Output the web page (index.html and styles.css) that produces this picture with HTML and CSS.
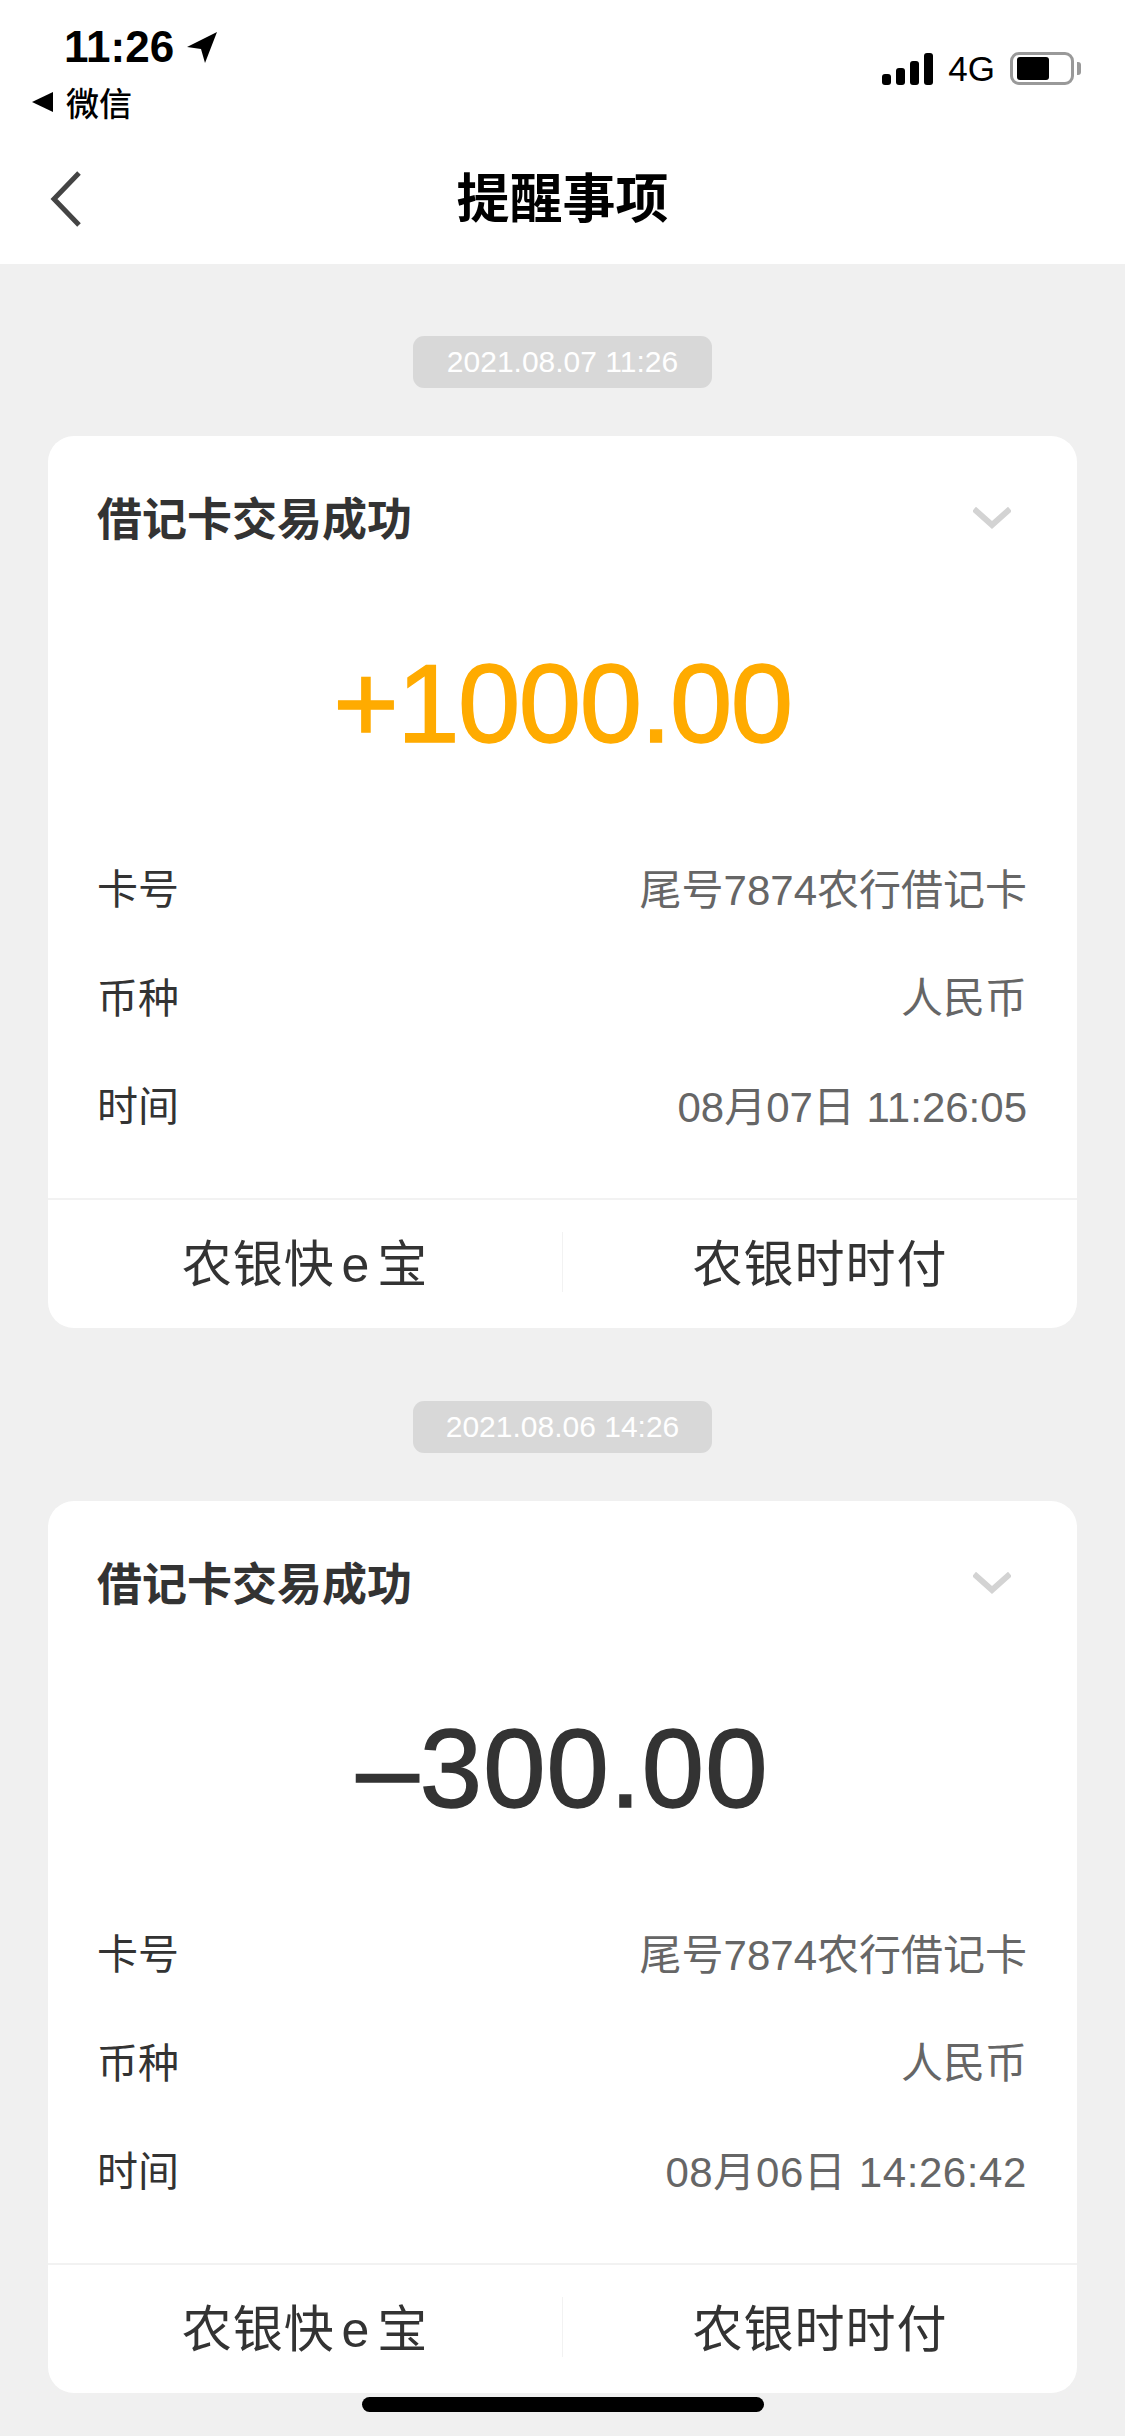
FILE: index.html
```html
<!DOCTYPE html>
<html lang="zh-CN">
<head>
    <meta charset="UTF-8">
    <meta name="viewport" content="width=device-width, initial-scale=1.0">
    <title>提醒事项</title>
    <link rel="stylesheet" href="styles.css">
</head>
<body>
    <header class="top">
        <div class="status">
            <div class="status-left">
                <div class="clock">
                    <span>11:26</span>
                    <svg class="loc" width="30" height="31" viewBox="0 0 30 31"><path d="M30 0 L0 15 L14 17 L18 31 Z" fill="#000"/></svg>
                </div>
                <div class="back-app">
                    <span class="back-tri"></span>
                    <span>微信</span>
                </div>
            </div>
            <div class="status-right">
                <div class="signal">
                    <i class="s1"></i><i class="s2"></i><i class="s3"></i><i class="s4"></i>
                </div>
                <span class="net">4G</span>
                <div class="battery"><div class="battery-level"></div></div>
                <div class="battery-nub"></div>
            </div>
        </div>
        <div class="nav">
            <svg class="nav-back" width="34" height="58" viewBox="0 0 34 58"><path d="M30 3 L5 29 L30 55" fill="none" stroke="#444" stroke-width="5"/></svg>
            <h1 class="nav-title">提醒事项</h1>
        </div>
    </header>

    <main class="list">
        <div class="stamp">2021.08.07 11:26</div>
        <section class="card">
            <div class="card-head">
                <h2 class="card-title">借记卡交易成功</h2>
                <svg class="chev" width="38" height="22" viewBox="0 0 38 22"><path d="M1 2 L19 18 L37 2" fill="none" stroke="#d3d3d3" stroke-width="6"/></svg>
            </div>
            <div class="amount plus">+1000.00</div>
            <div class="rows">
                <div class="row"><span class="row-label">卡号</span><span class="row-value">尾号7874农行借记卡</span></div>
                <div class="row"><span class="row-label">币种</span><span class="row-value">人民币</span></div>
                <div class="row"><span class="row-label">时间</span><span class="row-value">08月07日 11:26:05</span></div>
            </div>
            <div class="card-foot">
                <div class="foot-btn">农银快 e 宝</div>
                <div class="foot-sep"></div>
                <div class="foot-btn">农银时时付</div>
            </div>
        </section>

        <div class="stamp">2021.08.06 14:26</div>
        <section class="card">
            <div class="card-head">
                <h2 class="card-title">借记卡交易成功</h2>
                <svg class="chev" width="38" height="22" viewBox="0 0 38 22"><path d="M1 2 L19 18 L37 2" fill="none" stroke="#d3d3d3" stroke-width="6"/></svg>
            </div>
            <div class="amount">–300.00</div>
            <div class="rows">
                <div class="row"><span class="row-label">卡号</span><span class="row-value">尾号7874农行借记卡</span></div>
                <div class="row"><span class="row-label">币种</span><span class="row-value">人民币</span></div>
                <div class="row"><span class="row-label">时间</span><span class="row-value wide">08月06日 14:26:42</span></div>
            </div>
            <div class="card-foot">
                <div class="foot-btn">农银快 e 宝</div>
                <div class="foot-sep"></div>
                <div class="foot-btn">农银时时付</div>
            </div>
        </section>
        <div class="home-bar"></div>
    </main>
</body>
</html>
```

FILE: styles.css
```css
* {
    box-sizing: border-box;
}
html, body {
    margin: 0;
    padding: 0;
}
body {
    width: 1125px;
    height: 2436px;
    overflow: hidden;
    background-color: #f0f0f0;
    font-family: "Liberation Sans", "Noto Sans CJK SC", sans-serif;
    color: #333;
}

/* top: status bar + nav */
.top {
    height: 264px;
    background-color: #fff;
    color: #000;
}
.status {
    height: 140px;
    display: flex;
    justify-content: space-between;
}
.status-left {
    padding: 22px 0 0 32px;
}
.clock {
    display: flex;
    align-items: center;
    gap: 13px;
    padding-left: 32px;
    height: 50px;
    font-size: 44px;
    font-weight: 700;
}
.back-app {
    display: flex;
    align-items: center;
    gap: 13px;
    height: 45px;
    margin-top: 7px;
    font-size: 33px;
    font-weight: 500;
}
.back-tri {
    width: 0;
    height: 0;
    border-style: solid;
    border-width: 10px 21px 10px 0;
    border-color: transparent #000 transparent transparent;
}
.status-right {
    display: flex;
    align-items: center;
    height: 33px;
    margin-top: 52px;
    padding-right: 44px;
}
.signal {
    display: flex;
    align-items: flex-end;
    gap: 5px;
    height: 32px;
}
.signal i {
    display: block;
    width: 9px;
    border-radius: 3px;
    background-color: #000;
}
.s1 { height: 11px; }
.s2 { height: 17px; }
.s3 { height: 24px; }
.s4 { height: 32px; }
.net {
    margin-left: 15px;
    font-size: 35px;
    font-weight: 400;
}
.battery {
    width: 64px;
    height: 33px;
    margin-left: 15px;
    padding: 2px 4px;
    border: 3px solid #999;
    border-radius: 9px;
}
.battery-level {
    width: 32px;
    height: 100%;
    border-radius: 3px;
    background-color: #000;
}
.battery-nub {
    width: 4px;
    height: 13px;
    margin-left: 3px;
    border-radius: 0 3px 3px 0;
    background-color: #999;
}
.nav {
    position: relative;
    height: 124px;
    display: flex;
    align-items: center;
    justify-content: center;
    padding-bottom: 14px;
}
.nav-back {
    position: absolute;
    left: 49px;
    top: 30px;
}
.nav-title {
    margin: 0;
    font-size: 53px;
    font-weight: 700;
}

/* list */
.list {
    padding: 72px 48px 0;
}
.stamp {
    width: 299px;
    height: 52px;
    margin: 0 auto 48px;
    border-radius: 11px;
    background-color: #d8d8d8;
    color: #fff;
    font-size: 30px;
    line-height: 52px;
    text-align: center;
}
.card {
    height: 892px;
    margin-bottom: 73px;
    border-radius: 26px;
    background-color: #fff;
}
.card-head {
    height: 166px;
    padding: 56px 66px 0 49px;
    display: flex;
    justify-content: space-between;
}
.card-title {
    margin: 0;
    font-size: 45px;
    font-weight: 700;
    line-height: 58px;
}
.chev {
    margin-top: 15px;
}
.amount {
    height: 200px;
    font-size: 112px;
    letter-spacing: 1px;
    -webkit-text-stroke: 1.5px currentColor;
    line-height: 204px;
    text-align: center;
    color: #333;
}
.amount.plus {
    letter-spacing: -1.5px;
    color: #ffab00;
}
.rows {
    padding: 30px 50px 40px 49px;
}
.row {
    height: 108.5px;
    display: flex;
    justify-content: space-between;
    align-items: center;
    font-size: 41px;
}
.row-value {
    font-size: 42px;
    color: #666;
}
.row-value.wide {
    letter-spacing: 0.6px;
}
.card-foot {
    height: 130px;
    display: flex;
    align-items: center;
    border-top: 2px solid #f2f2f2;
}
.foot-btn {
    flex: 1;
    padding-bottom: 7px;
    font-size: 50px;
    letter-spacing: 1px;
    word-spacing: -8px;
    text-align: center;
}
.foot-sep {
    width: 1px;
    height: 60px;
    margin-bottom: 4px;
    background-color: #f2f2f2;
}
.home-bar {
    width: 402px;
    height: 15px;
    margin: -69px auto 0;
    border-radius: 8px;
    background-color: #000;
}
```
